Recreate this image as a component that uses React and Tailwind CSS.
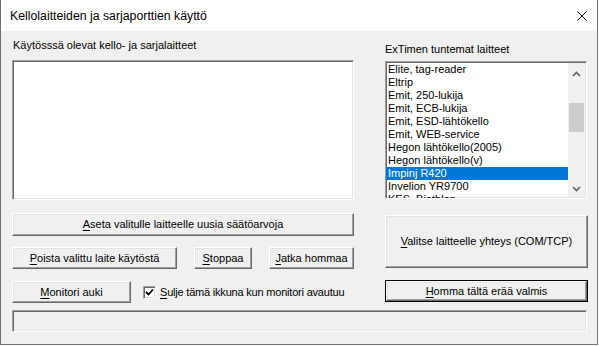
import React from 'react';

const items = [
  'Elite, tag-reader',
  'Eltrip',
  'Emit, 250-lukija',
  'Emit, ECB-lukija',
  'Emit, ESD-lähtökello',
  'Emit, WEB-service',
  'Hegon lähtökello(2005)',
  'Hegon lähtökello(v)',
  'Impinj R420',
  'Invelion YR9700',
  'KES, Biathlon',
];

const sunken =
  'border border-t-[#a0a0a0] border-l-[#a0a0a0] border-r-white border-b-white shadow-[inset_1px_1px_0_#696969,inset_-1px_-1px_0_#e3e3e3]';

const raised =
  'border border-t-white border-l-white border-r-[#696969] border-b-[#696969] shadow-[inset_-1px_-1px_0_#a0a0a0,inset_1px_1px_0_#e3e3e3] bg-[#f0f0f0]';

const Btn = ({ mn, rest, className = '' }) => (
  <button className={`${raised} flex items-center justify-center text-black ${className}`}>
    <span>
      <span className="underline underline-offset-2">{mn}</span>
      {rest}
    </span>
  </button>
);

export default function App() {
  return (
    <div
      className="w-[598px] h-[345px] bg-[#f0f0f0] border-l border-r border-b border-[#6f6f6f] flex flex-col text-[11px] leading-[13px] text-black"
      style={{ fontFamily: '"Liberation Sans", Arial, sans-serif' }}
    >
      {/* title bar */}
      <div className="h-[31px] bg-white flex items-center justify-between pl-[9px] pr-[9px] shrink-0">
        <span className="text-[12.3px] leading-[16px] pt-[1px]">Kellolaitteiden ja sarjaporttien käyttö</span>
        <svg width="10" height="10" viewBox="0 0 10 10" className="mr-[1px]">
          <path d="M0.5 0.5L9.5 9.5M9.5 0.5L0.5 9.5" stroke="#000" strokeWidth="1" />
        </svg>
      </div>

      <div className="flex-1 pl-[11px] flex flex-col">
        <div className="flex">
          {/* left column */}
          <div className="w-[342px] flex flex-col">
            <div className="mt-[8px] ml-[1px]">Käytösssä olevat kello- ja sarjalaitteet</div>
            <div className={`${sunken} mt-[8px] h-[140px] bg-white`} />
            <Btn mn="A" rest="seta valitulle laitteelle uusia säätöarvoja" className="mt-[13px] h-[23px] w-[342px]" />
            <div className="flex mt-[11px] gap-[17px]">
              <Btn mn="P" rest="oista valittu laite käytöstä" className="h-[22px] w-[165px]" />
              <Btn mn="S" rest="toppaa" className="h-[22px] w-[58px]" />
              <Btn mn="J" rest="atka hommaa" className="h-[22px] w-[85px]" />
            </div>
            <div className="flex items-center mt-[12px]">
              <Btn mn="M" rest="onitori auki" className="h-[22px] w-[119px]" />
              <div className={`${sunken} ml-[12px] w-[13px] h-[13px] bg-white flex items-center justify-center`}>
                <svg width="9" height="9" viewBox="0 0 9 9">
                  <path d="M1 4L3.5 6.5L8 1.5" stroke="#000" strokeWidth="1.8" fill="none" />
                </svg>
              </div>
              <span className="ml-[4px] tracking-[-0.2px]">
                <span className="underline underline-offset-2">S</span>ulje tämä ikkuna kun monitori avautuu
              </span>
            </div>
          </div>

          {/* right column */}
          <div className="w-[203px] ml-[31px] flex flex-col">
            <div className="mt-[12px]">ExTimen tuntemat laitteet</div>
            <div className={`${sunken} mt-[5px] h-[138px] w-[202px] bg-white flex overflow-hidden`}>
              <div className="flex-1 pt-[1px] overflow-hidden">
                {items.map((it) => (
                  <div
                    key={it}
                    className={`h-[13px] pl-[2px] whitespace-nowrap ${it === 'Impinj R420' ? 'bg-[#0078d7] text-white' : ''}`}
                  >
                    {it}
                  </div>
                ))}
              </div>
              <div className="w-[17px] my-[1px] mr-[1px] bg-[#f0f0f0] flex flex-col items-center">
                <svg width="9" height="6" viewBox="0 0 9 6" className="mt-[8px]">
                  <path d="M1 5L4.5 1.5L8 5" stroke="#606060" strokeWidth="1.6" fill="none" />
                </svg>
                <div className="w-[15px] h-[29px] bg-[#cdcdcd] mt-[26px]" />
                <div className="flex-1" />
                <svg width="9" height="6" viewBox="0 0 9 6" className="mb-[5px]">
                  <path d="M1 1L4.5 4.5L8 1" stroke="#606060" strokeWidth="1.6" fill="none" />
                </svg>
              </div>
            </div>
            <Btn mn="V" rest="alitse laitteelle yhteys (COM/TCP)" className="mt-[16px] h-[53px] w-[203px]" />
            <div className="mt-[12px] border border-black">
              <Btn mn="H" rest="omma tältä erää valmis" className="h-[20px] w-[201px]" />
            </div>
          </div>
        </div>
        <div className={`${sunken} mt-[7px] h-[22px] w-[575px]`} />
      </div>
    </div>
  );
}
